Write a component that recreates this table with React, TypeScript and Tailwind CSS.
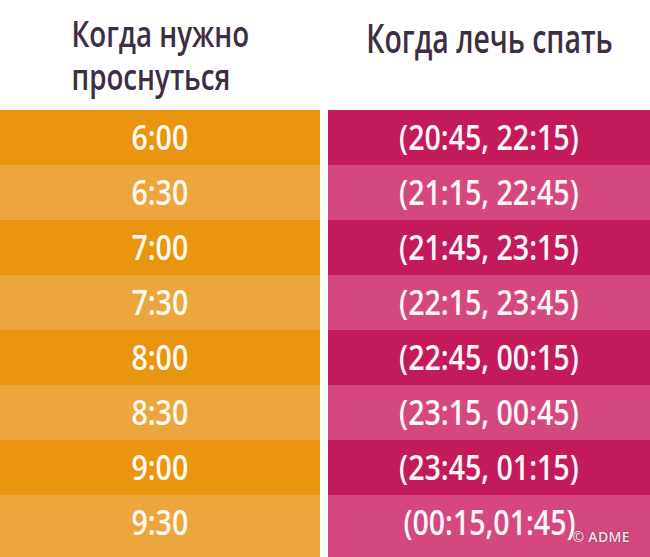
const rows = [
    { wake: '6:00', sleep: '(20:45, 22:15)' },
    { wake: '6:30', sleep: '(21:15, 22:45)' },
    { wake: '7:00', sleep: '(21:45, 23:15)' },
    { wake: '7:30', sleep: '(22:15, 23:45)' },
    { wake: '8:00', sleep: '(22:45, 00:15)' },
    { wake: '8:30', sleep: '(23:15, 00:45)' },
    { wake: '9:00', sleep: '(23:45, 01:15)' },
    { wake: '9:30', sleep: '(00:15,01:45)' },
];

export default function App() {
    return (
        <div className="relative w-[650px] h-[557px] overflow-hidden bg-white font-['Open_Sans',sans-serif]">
            {/* Header */}
            <div className="grid grid-cols-[320px_minmax(0,1fr)] gap-x-2 h-[110px] text-[#3d2e42] font-semibold">
                <div className="flex justify-center pt-[12px]">
                    <div className="inline-block whitespace-nowrap text-left text-[36px] leading-[43px] scale-x-[0.77]">
                        Когда нужно
                        <br />
                        проснуться
                    </div>
                </div>
                <div className="flex justify-center pt-[13px]">
                    <span className="inline-block shrink-0 whitespace-nowrap text-[40px] leading-[50px] scale-x-[0.71]">
                        Когда лечь спать
                    </span>
                </div>
            </div>

            {/* Table */}
            <div className="grid grid-cols-[320px_minmax(0,1fr)] gap-x-2 text-[34px] font-semibold">
                {rows.map((row, i) => {
                    const dark = i % 2 === 0;
                    const last = i === rows.length - 1;
                    return (
                        <div key={row.wake} className="contents">
                            <div
                                className={`flex items-center justify-center text-[#fffaf0] ${last ? 'h-[62px] pb-[7px]' : 'h-[55px]'} ${
                                    dark ? 'bg-[#e9950f]' : 'bg-[#eca63d]'
                                }`}
                            >
                                <span className="inline-block whitespace-nowrap scale-x-[0.84]">{row.wake}</span>
                            </div>
                            <div
                                className={`flex items-center justify-center text-[#fff6fa] ${last ? 'h-[62px] pb-[7px]' : 'h-[55px]'} ${
                                    dark ? 'bg-[#c21a5b]' : 'bg-[#d4487f]'
                                }`}
                            >
                                <span className="inline-block whitespace-nowrap scale-x-[0.84]">{row.sleep}</span>
                            </div>
                        </div>
                    );
                })}
            </div>

            {/* Watermark */}
            <div className="absolute right-[20px] bottom-[10px] text-[14px] font-semibold tracking-wide text-[#f1e6ee] [text-shadow:0_0_2px_rgba(0,0,0,0.45)]">
                © ADME
            </div>
        </div>
    );
}
